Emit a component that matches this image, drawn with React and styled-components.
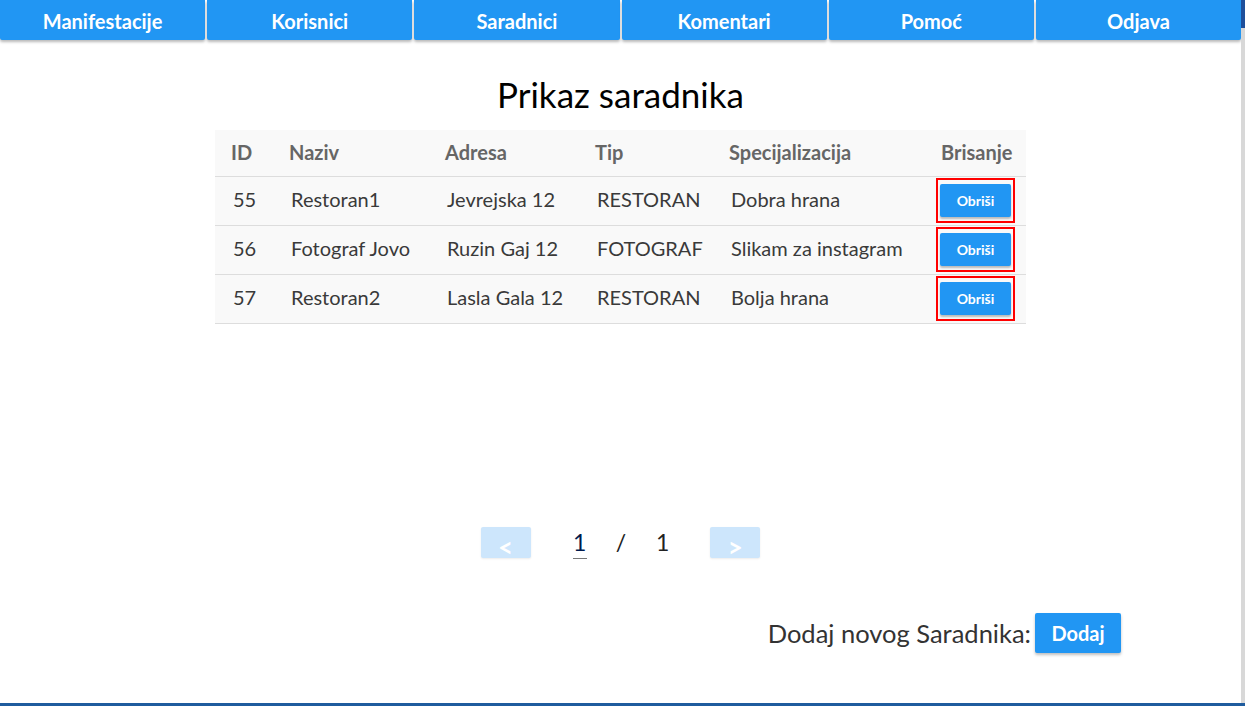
import React from 'react'
import styled, { createGlobalStyle } from 'styled-components'

const GlobalStyle = createGlobalStyle`
  html, body {
    margin: 0;
    padding: 0;
    background: #ffffff;
  }
  body {
    font-family: 'Lato', 'Open Sans', sans-serif;
  }
`

const menu = ['Manifestacije', 'Korisnici', 'Saradnici', 'Komentari', 'Pomoć', 'Odjava']

const rows = [
  { id: 55, naziv: 'Restoran1', adresa: 'Jevrejska 12', tip: 'RESTORAN', spec: 'Dobra hrana' },
  { id: 56, naziv: 'Fotograf Jovo', adresa: 'Ruzin Gaj 12', tip: 'FOTOGRAF', spec: 'Slikam za instagram' },
  { id: 57, naziv: 'Restoran2', adresa: 'Lasla Gala 12', tip: 'RESTORAN', spec: 'Bolja hrana' },
]

const widths = [58, 156, 150, 134, 212, 101]

export default () => {
  return (
    <>
      <GlobalStyle />
      <Frame>
        <Page>
          <Nav>
            {menu.map((m) => (
              <NavButton key={m}>{m}</NavButton>
            ))}
          </Nav>
          <Title>Prikaz saradnika</Title>
          <Table>
            <colgroup>
              {widths.map((w, i) => (
                <col key={i} style={{ width: w }} />
              ))}
            </colgroup>
            <thead>
              <tr>
                <Th>ID</Th>
                <Th>Naziv</Th>
                <Th>Adresa</Th>
                <Th>Tip</Th>
                <Th>Specijalizacija</Th>
                <Th>Brisanje</Th>
              </tr>
            </thead>
            <tbody>
              {rows.map((r) => (
                <tr key={r.id}>
                  <Td>{r.id}</Td>
                  <Td>{r.naziv}</Td>
                  <Td>{r.adresa}</Td>
                  <Td>{r.tip}</Td>
                  <Td>{r.spec}</Td>
                  <ButtonCell>
                    <RedBox>
                      <DeleteButton>Obriši</DeleteButton>
                    </RedBox>
                  </ButtonCell>
                </tr>
              ))}
            </tbody>
          </Table>
          <Pagination>
            <PageButton>&lt;</PageButton>
            <PageInput>1</PageInput>
            <Slash>/</Slash>
            <Total>1</Total>
            <PageButton>&gt;</PageButton>
          </Pagination>
          <Footer>
            <FooterLabel>Dodaj novog Saradnika:</FooterLabel>
            <AddButton>Dodaj</AddButton>
          </Footer>
        </Page>
        <Edge />
      </Frame>
    </>
  )
}

const Frame = styled.div`
  display: flex;
  height: 706px;
  box-sizing: border-box;
  border-bottom: 3px solid #1f5c9e;
  overflow: hidden;
`
const Page = styled.div`
  flex: 1;
  display: flex;
  flex-direction: column;
  align-items: center;
`
const Edge = styled.div`
  width: 4px;
  background: linear-gradient(#1f4f9a 0, #1f4f9a 28px, #d8d8d8 28px, #d8d8d8 100%);
`
const Nav = styled.nav`
  display: flex;
  width: 100%;
  gap: 2px;
  height: 40px;
`
const NavButton = styled.button`
  flex: 1;
  height: 40px;
  border: none;
  border-radius: 0 0 2px 2px;
  background: #2196f3;
  color: #ffffff;
  font-family: 'Lato', sans-serif;
  font-weight: bold;
  font-size: 20px;
  box-shadow: 0 2px 3px rgba(0, 0, 0, 0.28);
  padding: 2px 0 0;
`
const Title = styled.h1`
  margin: 35px 0 17px;
  font-family: 'Lato', sans-serif;
  font-weight: normal;
  font-size: 35px;
  line-height: 38px;
  color: #000000;
`
const Table = styled.table`
  width: 811px;
  table-layout: fixed;
  border-collapse: collapse;
  background: #f9f9f9;
  font-family: 'Lato', sans-serif;
  font-size: 20px;
`
const Th = styled.th`
  box-sizing: border-box;
  height: 46px;
  padding: 0 0 2px 16px;
  text-align: left;
  font-weight: bold;
  color: #666666;
  border-bottom: 1px solid #dddddd;
  white-space: nowrap;
`
const Td = styled.td`
  box-sizing: border-box;
  height: 49px;
  padding: 0 0 3px 18px;
  color: #3a3a3a;
  border-bottom: 1px solid #dddddd;
  white-space: nowrap;
`
const ButtonCell = styled.td`
  box-sizing: border-box;
  height: 49px;
  padding: 0 0 0 11px;
  border-bottom: 1px solid #dddddd;
`
const RedBox = styled.div`
  display: inline-flex;
  padding: 4px 2px;
  border: 2px solid #ff0000;
`
const DeleteButton = styled.button`
  width: 71px;
  height: 33px;
  border: none;
  border-radius: 2px;
  background: #2196f3;
  color: #ffffff;
  font-family: 'Lato', sans-serif;
  font-weight: bold;
  font-size: 14px;
  box-shadow: 0 2px 2px rgba(0, 0, 0, 0.25);
  padding: 0;
`
const Pagination = styled.div`
  display: flex;
  align-items: center;
  margin-top: 202px;
  font-family: 'Lato', sans-serif;
  font-size: 23px;
  color: #222222;
`
const PageButton = styled.button`
  width: 50px;
  height: 31px;
  border: none;
  border-radius: 2px;
  background: #cde6fc;
  color: #ffffff;
  font-family: 'Lato', sans-serif;
  font-weight: bold;
  font-size: 26px;
  line-height: 24px;
  padding: 8px 0 0;
  box-shadow: 0 1px 2px rgba(0, 0, 0, 0.08);
`
const PageInput = styled.span`
  width: 14px;
  margin: 0 29px 0 42px;
  text-align: center;
  border-bottom: 1px solid #777777;
  line-height: 32px;
  color: #001a4d;
`
const Slash = styled.span`
  margin-right: 30px;
  line-height: 32px;
`
const Total = styled.span`
  margin-right: 41px;
  line-height: 32px;
`
const Footer = styled.div`
  display: flex;
  align-items: center;
  align-self: flex-end;
  margin-top: 54px;
  padding-right: 120px;
`
const FooterLabel = styled.span`
  font-family: 'Lato', sans-serif;
  font-size: 25.5px;
  color: #333333;
  margin-right: 4px;
`
const AddButton = styled.button`
  width: 86px;
  height: 40px;
  border: none;
  border-radius: 2px;
  background: #2196f3;
  color: #ffffff;
  font-family: 'Lato', sans-serif;
  font-weight: bold;
  font-size: 20px;
  box-shadow: 0 2px 3px rgba(0, 0, 0, 0.25);
  padding: 0;
`
